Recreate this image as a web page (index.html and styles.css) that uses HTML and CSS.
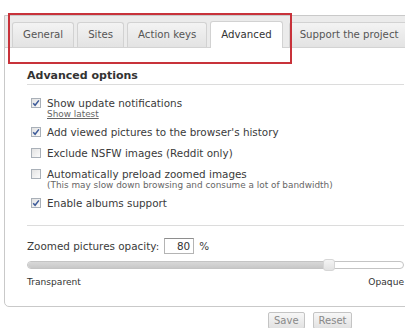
FILE: index.html
```html
<!DOCTYPE html>
<html lang="en">
<head>
    <meta charset="UTF-8">
    <title>Options</title>
    <link rel="stylesheet" href="styles.css">
</head>
<body>
    <div class="page">
        <!-- 설정 패널 -->
        <div class="panel">
            <ul class="tabs">
                <li class="tab">General</li>
                <li class="tab">Sites</li>
                <li class="tab">Action keys</li>
                <li class="tab active">Advanced</li>
                <li class="tab">Support the project</li>
            </ul>

            <div class="content">
                <h2 class="section-title">Advanced options</h2>

                <div class="options">
                    <div class="option">
                        <span class="check checked"><svg viewBox="0 0 10 10" width="10" height="10"><path d="M2.2 5.2 L4.1 7.3 L7.9 2.4" fill="none" stroke="#3c5a99" stroke-width="1.5"/></svg></span>
                        <div class="option-text">
                            <div class="label">Show update notifications</div>
                            <a class="sub link">Show latest</a>
                        </div>
                    </div>
                    <div class="option">
                        <span class="check checked"><svg viewBox="0 0 10 10" width="10" height="10"><path d="M2.2 5.2 L4.1 7.3 L7.9 2.4" fill="none" stroke="#3c5a99" stroke-width="1.5"/></svg></span>
                        <div class="option-text">
                            <div class="label">Add viewed pictures to the browser's history</div>
                        </div>
                    </div>
                    <div class="option">
                        <span class="check"></span>
                        <div class="option-text">
                            <div class="label">Exclude NSFW images (Reddit only)</div>
                        </div>
                    </div>
                    <div class="option">
                        <span class="check"></span>
                        <div class="option-text">
                            <div class="label">Automatically preload zoomed images</div>
                            <div class="sub">(This may slow down browsing and consume a lot of bandwidth)</div>
                        </div>
                    </div>
                    <div class="option">
                        <span class="check checked"><svg viewBox="0 0 10 10" width="10" height="10"><path d="M2.2 5.2 L4.1 7.3 L7.9 2.4" fill="none" stroke="#3c5a99" stroke-width="1.5"/></svg></span>
                        <div class="option-text">
                            <div class="label">Enable albums support</div>
                        </div>
                    </div>
                </div>

                <div class="separator"></div>

                <div class="opacity-row">
                    <span class="label">Zoomed pictures opacity:</span>
                    <span class="number-box">80</span>
                    <span class="label">%</span>
                </div>

                <div class="slider">
                    <div class="track"><div class="fill" style="width: 80%;"></div></div>
                    <span class="thumb" style="left: 80%;"></span>
                </div>
                <div class="slider-labels">
                    <span>Transparent</span>
                    <span>Opaque</span>
                </div>
            </div>
        </div>

        <div class="actions">
            <button type="button" class="btn">Save</button>
            <button type="button" class="btn">Reset</button>
        </div>

        <!-- 강조 표시 -->
        <div class="highlight"></div>
    </div>
</body>
</html>
```

FILE: styles.css
```css
html, body {
    margin: 0;
    overflow: hidden;
}

body {
    font-family: "DejaVu Sans", Verdana, sans-serif;
    color: #333;
    background-color: #ffffff;
}

.page {
    position: relative;
    width: 405px;
    height: 328px;
    overflow: hidden;
}

.panel {
    box-sizing: border-box;
    width: 423px;
    margin: 15px 0 0 4px;
    border: 1px solid #c9c9c9;
    border-radius: 0 0 5px 5px;
}

.tabs {
    display: flex;
    align-items: flex-end;
    height: 31px;
    margin: 0;
    padding: 0 0 0 7px;
    list-style: none;
    background-color: #ebebeb;
    border-bottom: 1px solid #d3d3d3;
}

.tab {
    height: 24px;
    line-height: 24px;
    padding: 0 10px;
    margin-right: 3px;
    font-size: 10.2px;
    color: #555;
    white-space: nowrap;
    background: linear-gradient(#f3f3f3, #e3e3e3);
    border: 1px solid #d2d2d2;
    border-bottom: none;
    border-radius: 3px 3px 0 0;
}

.tab.active {
    height: 26px;
    line-height: 26px;
    margin-bottom: -1px;
    margin-right: 6px;
    color: #333;
    background: #ffffff;
}

.content {
    padding: 21px 22px 18px;
}

.section-title {
    margin: 0;
    padding-bottom: 1px;
    font-size: 11px;
    line-height: 14px;
    font-weight: bold;
    color: #333;
    border-bottom: 1px solid #dcdcdc;
}

.options {
    margin-top: 11px;
    padding-left: 4px;
}

.option {
    display: flex;
    gap: 6px;
    margin-bottom: 7px;
}

.option:last-child {
    margin-bottom: 0;
}

.check {
    box-sizing: border-box;
    flex: none;
    width: 10px;
    height: 10px;
    margin-top: 2px;
    border: 1px solid #a9b0b8;
    background: linear-gradient(135deg, #e2e2e2, #fbfbfb);
}

.check svg {
    display: block;
    margin: -1px;
}

.label {
    font-size: 10.4px;
    line-height: 14px;
    color: #3a3a3a;
}

.sub {
    display: block;
    font-size: 8.9px;
    line-height: 8px;
    color: #666;
}

.link {
    text-decoration: underline;
    color: #666;
}

.separator {
    margin-top: 15px;
    border-top: 1px solid #dcdcdc;
}

.opacity-row {
    display: flex;
    align-items: center;
    gap: 5px;
    height: 16px;
    margin-top: 12px;
}

.number-box {
    box-sizing: border-box;
    width: 30px;
    height: 16px;
    padding-right: 3px;
    font-size: 10.4px;
    line-height: 14px;
    text-align: right;
    border: 1px solid #b4b4b4;
    border-top-color: #8e8e8e;
}

.slider {
    position: relative;
    display: flex;
    align-items: center;
    height: 12px;
    margin-top: 5px;
}

.track {
    box-sizing: border-box;
    width: 100%;
    height: 8px;
    overflow: hidden;
    border: 1px solid #c4c4c4;
    border-radius: 4px;
    background-color: #ffffff;
}

.fill {
    height: 100%;
    background: linear-gradient(#d8d8d8, #c8c8c8);
}

.thumb {
    position: absolute;
    top: 0;
    box-sizing: border-box;
    width: 12px;
    height: 12px;
    margin-left: -6px;
    border: 1px solid #d6d6d6;
    border-radius: 3px;
    background: linear-gradient(#f4f4f4, #e2e2e2);
}

.slider-labels {
    display: flex;
    justify-content: space-between;
    margin-top: 5px;
    font-size: 9.1px;
    line-height: 12px;
    color: #333;
}

.actions {
    display: flex;
    gap: 8px;
    margin-top: 5px;
    padding-left: 268px;
}

.btn {
    height: 17px;
    padding: 0 5px;
    font-family: "DejaVu Sans", Verdana, sans-serif;
    font-size: 10px;
    color: #888;
    background: linear-gradient(#f7f7f7, #e2e2e2);
    border: 1px solid #c4c4c4;
    border-radius: 2px;
}

.highlight {
    position: absolute;
    left: 8px;
    top: 13px;
    width: 284px;
    height: 51px;
    box-sizing: border-box;
    border: 2px solid #c8323a;
}
```
